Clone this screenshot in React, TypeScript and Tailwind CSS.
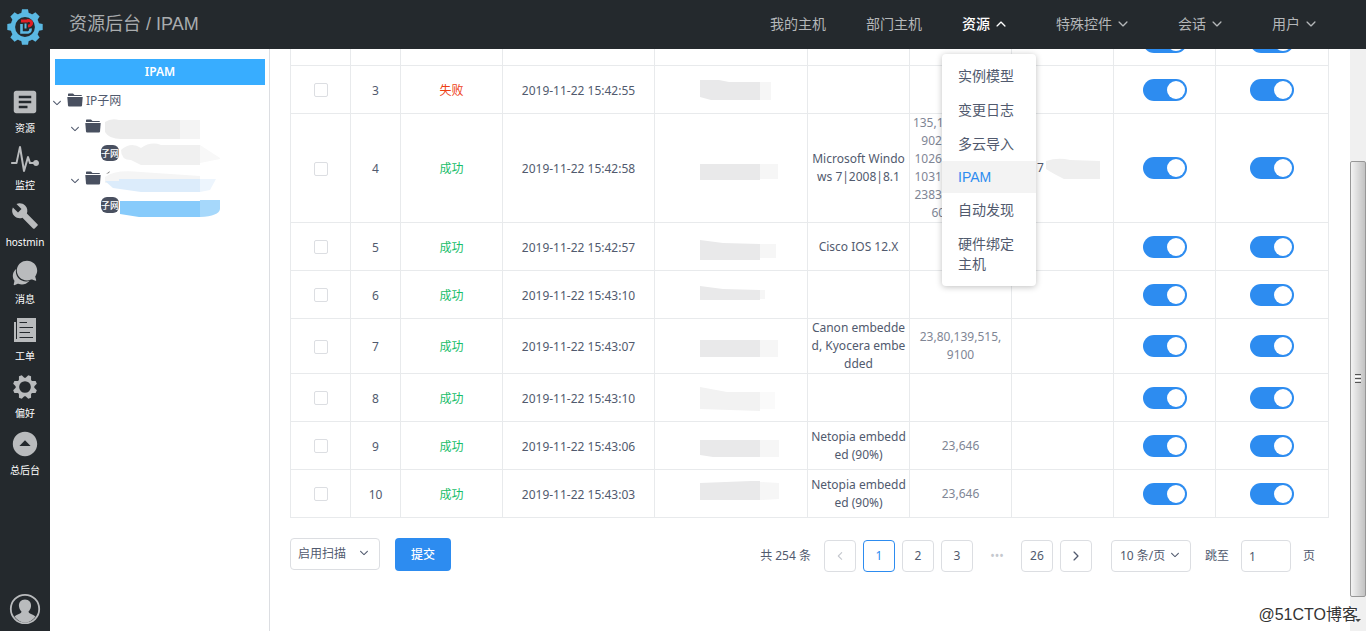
import { useState } from 'react';
import type { ReactNode } from 'react';
import { IoIosArrowDown, IoIosArrowUp, IoIosArrowBack, IoIosArrowForward, IoIosPulse, IoIosChatbubbles, IoMdArrowDropupCircle } from 'react-icons/io';
import { MdArticle, MdBuild } from 'react-icons/md';

type Row = {
    id: number;
    status?: '成功' | '失败';
    time?: string;
    mask: string;
    maskTail: string;
    faint?: boolean;
    os?: string;
    ports?: string[];
    tall?: string;
};

const rows: Row[] = [
    { id: 2, mask: '', maskTail: '' },
    { id: 3, status: '失败', time: '2019-11-22 15:42:55', mask: 'M19 4H38L48 6H79V24H30L19 21Z', maskTail: 'M79 6H90V24H79Z' },
    {
        id: 4, status: '成功', time: '2019-11-22 15:42:58', mask: 'M19 10H79V26H19Z', maskTail: 'M79 10H97V25H79Z',
        os: 'Microsoft Windows 7|2008|8.1',
        ports: ['135,139,445,554,', '902,912,1025,', '1026,1027,1029,', '1031,1032,1033,', '2383,3306,3389,', '6001,6002'],
        tall: 'h-[109px]',
    },
    { id: 5, status: '成功', time: '2019-11-22 15:42:57', mask: 'M19 7L42 10L79 11V27H19Z', maskTail: 'M79 11H95V25H79Z', os: 'Cisco IOS 12.X' },
    { id: 6, status: '成功', time: '2019-11-22 15:43:10', mask: 'M19 5L42 8L79 9V19H19Z', maskTail: 'M79 9H84V18H79Z' },
    { id: 7, status: '成功', time: '2019-11-22 15:43:07', mask: 'M19 8H79V25H19Z', maskTail: 'M79 8H97V25H79Z', os: 'Canon embedded, Kyocera embedded', ports: ['23,80,139,515,', '9100'], tall: 'h-[55px]' },
    { id: 8, status: '成功', time: '2019-11-22 15:43:10', mask: 'M19 3L46 8H79V27L19 25Z', maskTail: 'M79 8H94V25H79Z', faint: true },
    { id: 9, status: '成功', time: '2019-11-22 15:43:06', mask: 'M19 8H79V25H32L19 23Z', maskTail: 'M79 8H98V25H79Z', os: 'Netopia embedded (90%)', ports: ['23,646'] },
    { id: 10, status: '成功', time: '2019-11-22 15:43:03', mask: 'M19 3L70 1L79 1V20H19Z', maskTail: 'M79 2L98 3V19L79 20Z', os: 'Netopia embedded (90%)', ports: ['23,646'] },
];

const resourceMenu = ['实例模型', '变更日志', '多云导入', 'IPAM', '自动发现', '硬件绑定主机'];

function GearIcon() {
    return (
        <svg viewBox="0 0 24 24" className="h-[26px] w-[26px]" aria-hidden="true">
            <circle cx="12" cy="12" r="7" fill="none" stroke="currentColor" strokeWidth="3.2" />
            {[22.5, 67.5, 112.5, 157.5, 202.5, 247.5, 292.5, 337.5].map((a) => (
                <path key={a} d="M8.8 5L10.6 0.8H13.4L15.2 5Z" fill="currentColor" transform={`rotate(${a} 12 12)`} />
            ))}
        </svg>
    );
}

function PaperIcon() {
    return (
        <svg viewBox="0 0 24 26" className="h-[26px] w-6" aria-hidden="true">
            <path d="M4 1H23V25H1V5H4Z" fill="currentColor" />
            <path d="M3.5 5V22" stroke="#24292d" />
            <path d="M6.5 5.5H14M6.5 10.5H20M6.5 15.5H17M6.5 20.5H20" stroke="#24292d" />
        </svg>
    );
}

function AvatarIcon() {
    return (
        <svg viewBox="0 0 32 32" className="h-8 w-8" aria-hidden="true">
            <circle cx="16" cy="16" r="14.2" fill="none" stroke="currentColor" strokeWidth="1.8" />
            <path d="M16 6.5C20 6.5 22.5 9.5 22 13.5C21.7 16 20.5 17.5 19.5 18.5C19.5 21 24 21 26.5 23.5Q22 29.5 16 29.5T5.5 23.5C8 21 12.500 21 12.5 18.5C11.5 17.5 10.3 16 10 13.5C9.5 9.5 12 6.5 16 6.5Z" fill="currentColor" />
        </svg>
    );
}

function FolderIcon() {
    return (
        <svg viewBox="0 0 16 14" className="h-[14px] w-4 shrink-0 text-[#495060]" aria-hidden="true">
            <path d="M1 3V1.2Q1 0.5 1.7 0.5H6L7.5 2H14Q15 2 15 3Z" fill="currentColor" />
            <path d="M0.3 4H15.7L15 12.5Q14.9 13.5 14 13.5H2Q1.1 13.5 1 12.5Z" fill="currentColor" />
        </svg>
    );
}

function Logo() {
    return (
        <svg viewBox="0 0 36 36" className="h-9 w-9" aria-label="logo">
            <circle cx="18" cy="18" r="12.2" fill="none" stroke="#5bb8e2" strokeWidth="4.6" />
            {[0, 45, 90, 135, 180, 225, 270, 315].map((a) => (
                <path key={a} d="M14 5.5L15 0.3H21L22 5.5Z" fill="#5bb8e2" transform={`rotate(${a} 18 18)`} />
            ))}
            <path d="M14 12H21" stroke="#e01f26" strokeWidth="3" />
            <path d="M20 11.5C26 10.5 26 17 21 17" fill="none" stroke="#e01f26" strokeWidth="3" />
            <path d="M14.5 15V23.5H21Q24 23 23.5 19.500" fill="none" stroke="#5bb8e2" strokeWidth="2.6" />
            <path d="M18.5 14.5V19.5" stroke="#5bb8e2" strokeWidth="2" />
        </svg>
    );
}

const sideItems: { label: string; icon: ReactNode }[] = [
    { label: '资源', icon: <MdArticle size={30} /> },
    { label: '监控', icon: <IoIosPulse size={32} /> },
    { label: 'hostmin', icon: <MdBuild size={28} /> },
    { label: '消息', icon: <IoIosChatbubbles size={30} /> },
    { label: '工单', icon: <PaperIcon /> },
    { label: '偏好', icon: <GearIcon /> },
    { label: '总后台', icon: <IoMdArrowDropupCircle size={30} /> },
];

function Sidebar() {
    return (
        <aside className="flex w-[50px] shrink-0 flex-col items-center bg-[#24292d] pt-[9px] pb-[6px] text-[#b9bbbd]">
            <Logo />
            <nav className="mt-11 flex w-full flex-col gap-[11px]">
                {sideItems.map((item) => (
                    <a key={item.label} href="#" className="flex h-[46px] flex-col items-center justify-between hover:text-white">
                        <span className="flex h-[26px] items-center">{item.icon}</span>
                        <span className="text-[10px] leading-[14px] text-white">{item.label}</span>
                    </a>
                ))}
            </nav>
            <a href="#" aria-label="账户" className="mt-auto">
                <AvatarIcon />
            </a>
        </aside>
    );
}

function NavItem({ label, arrow }: { label: string; arrow?: boolean }) {
    return (
        <a href="#" className="flex h-full items-center px-5 text-[#b4b7b9] hover:text-white">
            {label}
            {arrow && <IoIosArrowDown size={14} className="mr-2 ml-1" />}
        </a>
    );
}

function Header() {
    const [open, setOpen] = useState(true);

    return (
        <header className="z-10 flex h-[49px] shrink-0 items-center justify-between bg-[#24292d] pr-5 pb-px pl-[19px] font-['Liberation_Sans','Noto_Sans_CJK_SC',sans-serif]">
            <h1 className="text-lg text-[#a9acae]">资源后台 / IPAM</h1>
            <nav className="flex h-12 items-center text-sm">
                <NavItem label="我的主机" />
                <NavItem label="部门主机" />
                <div className="relative h-full">
                    <button type="button" aria-expanded={open} onClick={() => setOpen(!open)} className="flex h-full items-center px-5 font-medium text-white">
                        资源
                        <IoIosArrowUp size={14} className="mr-2 ml-1" />
                    </button>
                    {open && (
                        <ul className="absolute top-full left-0 mt-[6px] w-full rounded bg-white py-[5px] text-[#515a6e] shadow-[0_1px_6px_rgba(0,0,0,0.25)]">
                            {resourceMenu.map((item) => (
                                <li key={item}>
                                    <a href="#" className={item === 'IPAM' ? 'block bg-[#f3f3f3] px-4 py-[6px] leading-5 text-[#2d8cf0]' : 'block px-4 py-[7px] leading-5 hover:bg-[#f3f3f3]'}>
                                        {item}
                                    </a>
                                </li>
                            ))}
                        </ul>
                    )}
                </div>
                <NavItem label="特殊控件" arrow />
                <NavItem label="会话" arrow />
                <NavItem label="用户" arrow />
            </nav>
        </header>
    );
}

function SubnetBadge() {
    return <span className="flex h-4 w-[18px] items-center justify-center rounded-md bg-[#495060] text-[9px] leading-none font-medium whitespace-nowrap text-white">子网</span>;
}

function TreePanel() {
    return (
        <section className="w-[220px] shrink-0 border-r border-[#dcdee2] pt-[10px] pr-1 pl-[5px]">
            <button type="button" className="mb-[3px] block h-[26px] w-full bg-[#38adff] font-semibold text-white">IPAM</button>
            <ul className="text-[#515a6e]">
                <li className="flex h-[26px] items-center">
                    <IoIosArrowDown size={12} className="-ml-1 mt-1" />
                    <span className="mr-[3px] ml-1 pb-[2px]"><FolderIcon /></span>
                    IP子网
                </li>
                <li className="flex h-[26px] items-center pl-[14px]">
                    <IoIosArrowDown size={12} className="mt-1" />
                    <span className="ml-1 pb-[2px]"><FolderIcon /></span>
                    <svg width="100" height="26" aria-hidden="true">
                        <path d="M4 8Q10 4 18 6H79V25H20Q8 25 4 18Z" fill="#ececec" />
                        <path d="M79 6H99V25H79Z" fill="#f4f4f4" />
                    </svg>
                </li>
                <li className="flex h-[26px] items-center pl-[46px]">
                    <SubnetBadge />
                    <svg width="104" height="26" aria-hidden="true">
                        <path d="M2 10Q12 1 22 8Q32 1 42 5H81V25H22L12 20Q2 20 2 10Z" fill="#f0f0f0" />
                        <path d="M81 5L101 18V19L81 23Z" fill="#f8f8f8" />
                    </svg>
                </li>
                <li className="flex h-[26px] items-center pl-[14px]">
                    <IoIosArrowDown size={12} className="mt-1" />
                    <span className="ml-1 pb-[2px]"><FolderIcon /></span>
                    <svg width="120" height="26" aria-hidden="true">
                        <path d="M4 11Q14 3 40 6L99 10V17H4Z" fill="#f5f5f5" />
                        <path d="M4 15H18V13H99V26H40L12 22Z" fill="#dcecfb" />
                        <path d="M99 13H115L109 24L99 26Z" fill="#edf5fd" />
                        <path d="M5 8L9 5L8 7Z" fill="#777" />
                    </svg>
                </li>
                <li className="flex h-[26px] items-center pl-[46px]">
                    <SubnetBadge />
                    <svg width="104" height="26" aria-hidden="true">
                        <path d="M1 9H81V25H20L1 22Z" fill="#87cbfb" />
                        <path d="M81 8H101V17Q100 24 81 25Z" fill="#a6d8fb" />
                    </svg>
                </li>
            </ul>
        </section>
    );
}

function Toggle({ label }: { label: string }) {
    return (
        <input
            type="checkbox"
            role="switch"
            aria-label={label}
            defaultChecked
            className="mx-auto flex h-[22px] w-11 cursor-pointer appearance-none items-center rounded-full bg-[#c5c8ce] p-[2px] before:block before:h-[18px] before:w-[18px] before:rounded-full before:bg-white before:content-[''] checked:justify-end checked:bg-[#2d8cf0]"
        />
    );
}

function HostTable() {
    return (
        <table className="-mt-8 w-full table-fixed border-collapse border border-[#dcdee2] text-center leading-[18px] text-[#515a6e]">
            <colgroup>
                <col className="w-[60px]" />
                <col className="w-[50px]" />
                <col className="w-[102px]" />
                <col className="w-[152px]" />
                <col className="w-[153px]" />
                <col className="w-[102px]" />
                <col className="w-[102px]" />
                <col className="w-[102px]" />
                <col className="w-[102px]" />
                <col />
            </colgroup>
            <tbody>
                {rows.map((row) => (
                    <tr key={row.id} className={row.tall ?? 'h-12'}>
                        <td className="border border-[#e8eaec] p-0 pt-px">
                            <input type="checkbox" aria-label={`选择 ${row.id}`} className="mx-auto block h-[14px] w-[14px] appearance-none rounded-xs border border-[#dcdee2] bg-white checked:bg-[#2d8cf0]" />
                        </td>
                        <td className="border border-[#e8eaec] p-0 pt-[2px]">{row.status && row.id}</td>
                        <td className={row.status === '失败' ? 'border border-[#e8eaec] p-0 pt-[2px] text-[#ed4014]' : 'border border-[#e8eaec] p-0 pt-[2px] text-[#19be6b]'}>{row.status}</td>
                        <td className="border border-[#e8eaec] p-0 pt-[2px]">{row.time}</td>
                        <td className="border border-[#e8eaec] p-0">
                            <svg width="100" height="28" className="mx-auto block" aria-hidden="true">
                                <path d={row.mask} fill={row.faint ? '#f2f2f2' : '#e9e9ea'} />
                                <path d={row.maskTail} fill={row.faint ? '#fafafa' : '#f6f6f6'} />
                            </svg>
                        </td>
                        <td className="border border-[#e8eaec] p-0 break-all">{row.os}</td>
                        <td className="border border-[#e8eaec] p-0 text-[#808695]">
                            {row.ports?.map((line) => <div key={line}>{line}</div>)}
                        </td>
                        <td className="border border-[#e8eaec] p-0">
                            {row.id === 4 && (
                                <div className="flex items-center pl-[25px]">
                                    7
                                    <svg width="64" height="22" aria-hidden="true">
                                        <path d="M2 4Q14 0 26 3L56 4V22H20Q8 16 2 12Z" fill="#efefef" />
                                    </svg>
                                </div>
                            )}
                        </td>
                        <td className="border border-[#e8eaec] p-0"><Toggle label={`启用扫描 ${row.id}`} /></td>
                        <td className="border border-[#e8eaec] p-0"><Toggle label={`启用监控 ${row.id}`} /></td>
                    </tr>
                ))}
            </tbody>
        </table>
    );
}

function PageButton({ children, active, label }: { children: ReactNode; active?: boolean; label?: string }) {
    return (
        <button
            type="button"
            aria-label={label}
            className={active ? 'flex h-8 w-8 items-center justify-center rounded border border-[#2d8cf0] text-[#2d8cf0]' : 'flex h-8 w-8 items-center justify-center rounded border border-[#dcdee2]'}
        >
            {children}
        </button>
    );
}

function TableFooter() {
    return (
        <div className="mt-5 flex items-start justify-between pr-[14px] text-[#515a6e]">
            <div className="flex items-start gap-[15px]">
                <div className="relative">
                    <select aria-label="批量操作" className="block h-8 w-[90px] appearance-none rounded border border-[#dcdee2] bg-white pl-[7px]">
                        <option>启用扫描</option>
                        <option>停用扫描</option>
                    </select>
                    <IoIosArrowDown size={12} className="pointer-events-none absolute top-[9px] right-[10px]" />
                </div>
                <button type="button" className="h-[33px] w-14 rounded bg-[#2d8cf0] font-medium text-white">提交</button>
            </div>
            <div className="mt-[2px] flex items-center">
                <span className="mr-[13px]">共 254 条</span>
                <div className="flex items-center gap-[7px]">
                    <PageButton label="上一页"><IoIosArrowBack size={12} className="text-[#c5c8ce]" /></PageButton>
                    <PageButton active>1</PageButton>
                    <PageButton>2</PageButton>
                    <PageButton>3</PageButton>
                    <span className="w-[34px] text-center text-[#c5c8ce]">•••</span>
                    <PageButton>26</PageButton>
                    <PageButton label="下一页"><IoIosArrowForward size={14} /></PageButton>
                </div>
                <div className="relative ml-[19px]">
                    <select aria-label="每页条数" className="block h-8 w-20 appearance-none rounded border border-[#dcdee2] bg-white pl-2">
                        <option>10 条/页</option>
                        <option>20 条/页</option>
                    </select>
                    <IoIosArrowDown size={12} className="pointer-events-none absolute top-[9px] right-[10px]" />
                </div>
                <label htmlFor="jump" className="ml-[14px]">跳至</label>
                <input id="jump" type="text" defaultValue="1" className="mr-3 ml-3 h-8 w-[50px] rounded border border-[#dcdee2] px-[7px]" />
                <span>页</span>
            </div>
        </div>
    );
}

function ScrollTrack() {
    return (
        <div className="flex w-4 shrink-0 flex-col bg-[#f0f0f0]" aria-hidden="true">
            <div className="flex-[112]" />
            <div className="flex flex-[436] flex-col items-center justify-center gap-px rounded-xs border border-[#979797] bg-linear-to-r from-[#f3f3f3] to-[#c2c2c2]">
                <span className="h-px w-[6px] bg-[#555]" />
                <span className="h-px w-[6px] bg-white" />
                <span className="h-px w-[6px] bg-[#555]" />
                <span className="h-px w-[6px] bg-white" />
                <span className="h-px w-[6px] bg-[#555]" />
            </div>
            <div className="flex flex-[34] items-end justify-center">
                <svg width="6" height="12"><path d="M0 0H6L3 3Z" fill="#444" /></svg>
            </div>
        </div>
    );
}

export default function App() {
    return (
        <div className="relative flex h-screen overflow-hidden bg-white font-['Noto_Sans','Noto_Sans_CJK_SC',sans-serif] text-xs">
            <Sidebar />
            <div className="flex min-w-0 flex-1 flex-col">
                <Header />
                <div className="flex min-h-0 flex-1">
                    <TreePanel />
                    <main className="min-w-0 flex-1 overflow-hidden pr-[21px] pl-5">
                        <HostTable />
                        <TableFooter />
                    </main>
                    <ScrollTrack />
                </div>
            </div>
            <div className="absolute right-2 bottom-1 font-['Liberation_Sans','Noto_Sans_CJK_SC',sans-serif] text-base text-[#333] [text-shadow:1px_1px_1px_#fff]">@51CTO博客</div>
        </div>
    );
}
